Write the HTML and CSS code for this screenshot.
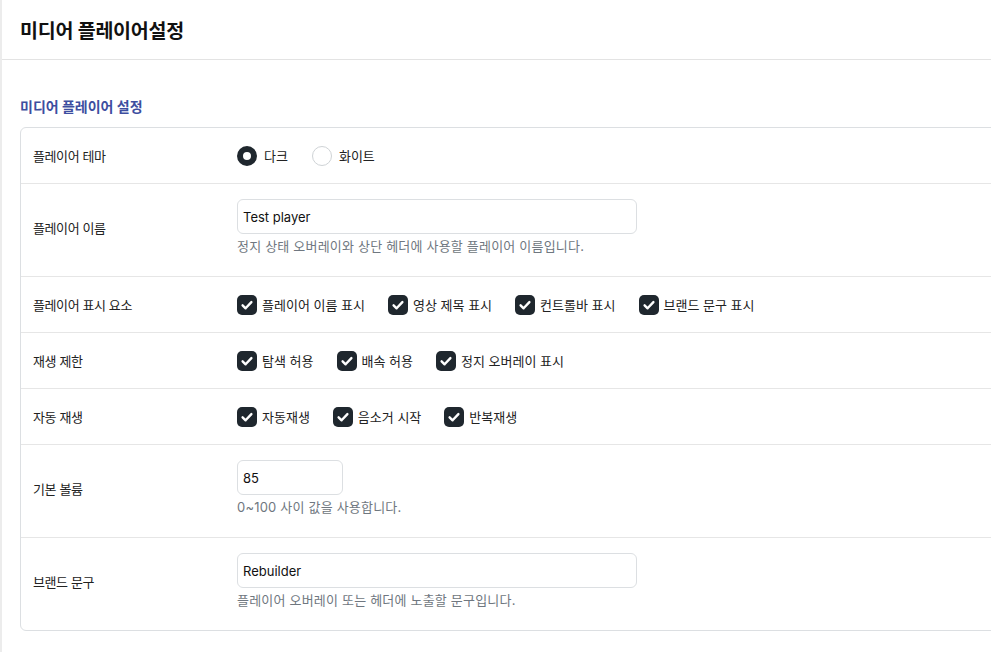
FILE: index.html
```html
<!DOCTYPE html>
<html lang="ko">
<head>
<meta charset="utf-8">
<title>미디어 플레이어설정</title>
<link rel="stylesheet" href="styles.css">
</head>
<body>
<div class="page">
  <header class="page-header">
    <h1 class="page-title">미디어 플레이어설정</h1>
  </header>
  <main class="content">
    <h2 class="section-title">미디어 플레이어 설정</h2>
    <div class="card">
      <div class="row">
        <div class="label">플레이어 테마</div>
        <div class="control options radios">
          <label class="opt"><span class="radio on"></span>다크</label>
          <label class="opt"><span class="radio"></span>화이트</label>
        </div>
      </div>
      <div class="row tall">
        <div class="label">플레이어 이름</div>
        <div class="control">
          <div class="input wide">Test player</div>
          <div class="help">정지 상태 오버레이와 상단 헤더에 사용할 플레이어 이름입니다.</div>
        </div>
      </div>
      <div class="row">
        <div class="label">플레이어 표시 요소</div>
        <div class="control options">
          <label class="opt"><span class="check"><svg viewBox="0 0 20 20"><path d="M5.6 10.3l3 3 5.8-6.2"/></svg></span>플레이어 이름 표시</label>
          <label class="opt"><span class="check"><svg viewBox="0 0 20 20"><path d="M5.6 10.3l3 3 5.8-6.2"/></svg></span>영상 제목 표시</label>
          <label class="opt"><span class="check"><svg viewBox="0 0 20 20"><path d="M5.6 10.3l3 3 5.8-6.2"/></svg></span>컨트롤바 표시</label>
          <label class="opt"><span class="check"><svg viewBox="0 0 20 20"><path d="M5.6 10.3l3 3 5.8-6.2"/></svg></span>브랜드 문구 표시</label>
        </div>
      </div>
      <div class="row">
        <div class="label">재생 제한</div>
        <div class="control options">
          <label class="opt"><span class="check"><svg viewBox="0 0 20 20"><path d="M5.6 10.3l3 3 5.8-6.2"/></svg></span>탐색 허용</label>
          <label class="opt"><span class="check"><svg viewBox="0 0 20 20"><path d="M5.6 10.3l3 3 5.8-6.2"/></svg></span>배속 허용</label>
          <label class="opt"><span class="check"><svg viewBox="0 0 20 20"><path d="M5.6 10.3l3 3 5.8-6.2"/></svg></span>정지 오버레이 표시</label>
        </div>
      </div>
      <div class="row">
        <div class="label">자동 재생</div>
        <div class="control options">
          <label class="opt"><span class="check"><svg viewBox="0 0 20 20"><path d="M5.6 10.3l3 3 5.8-6.2"/></svg></span>자동재생</label>
          <label class="opt"><span class="check"><svg viewBox="0 0 20 20"><path d="M5.6 10.3l3 3 5.8-6.2"/></svg></span>음소거 시작</label>
          <label class="opt"><span class="check"><svg viewBox="0 0 20 20"><path d="M5.6 10.3l3 3 5.8-6.2"/></svg></span>반복재생</label>
        </div>
      </div>
      <div class="row tall">
        <div class="label">기본 볼륨</div>
        <div class="control">
          <div class="input narrow">85</div>
          <div class="help">0~100 사이 값을 사용합니다.</div>
        </div>
      </div>
      <div class="row tall">
        <div class="label">브랜드 문구</div>
        <div class="control">
          <div class="input wide">Rebuilder</div>
          <div class="help">플레이어 오버레이 또는 헤더에 노출할 문구입니다.</div>
        </div>
      </div>
    </div>
  </main>
</div>
</body>
</html>
```
FILE: styles.css
```css
* { box-sizing: border-box; }
html, body { margin: 0; padding: 0; background: #fff; overflow: hidden; }
body {
  font-family: Inter, "Noto Sans CJK KR", sans-serif;
  color: #222;
  width: 991px;
  height: 652px;
}
.page {
  border-left: 2px solid #ececec;
  height: 652px;
}
.page-header {
  height: 60px;
  border-bottom: 1px solid #e3e3e3;
  padding: 0 18px;
  display: flex;
  align-items: center;
}
.page-title {
  margin: 0;
  font-size: 19.5px;
  font-weight: 700;
  color: #111;
  letter-spacing: -0.2px;
}
.content {
  padding: 37px 0 0 18px;
}
.section-title {
  margin: 0 0 10px;
  font-size: 14px;
  line-height: 20px;
  font-weight: 700;
  color: #3d4ea0;
}
.card {
  width: 1000px;
  border: 1px solid #dcdfe2;
  border-radius: 6px;
}
.row {
  display: grid;
  grid-template-columns: 204px 1fr;
  align-items: center;
  min-height: 56px;
  padding: 0 12px;
  border-bottom: 1px solid #e6e6e6;
}
.row:last-child { border-bottom: none; }
.row.tall {
  padding-top: 15px;
  padding-bottom: 21px;
}
.label {
  font-size: 13px;
  letter-spacing: -0.4px;
  color: #222;
}
.options {
  display: flex;
  align-items: center;
  gap: 23px;
  font-size: 13px;
}
.opt {
  display: flex;
  align-items: center;
  gap: 5px;
  color: #222;
}
.radios .opt { gap: 7px; }
.radios { gap: 24px; }
.radio {
  width: 20px;
  height: 20px;
  border-radius: 50%;
  border: 1px solid #cfd3d6;
  background: #fff;
  display: inline-block;
}
.radio.on {
  border: 6px solid #1f272e;
  background: #fff;
}
.check {
  width: 20px;
  height: 20px;
  border-radius: 5px;
  background: #1f272e;
  display: inline-flex;
}
.check svg {
  width: 20px;
  height: 20px;
  fill: none;
  stroke: #fff;
  stroke-width: 2.4;
  stroke-linecap: round;
  stroke-linejoin: round;
}
.input {
  height: 35px;
  border: 1px solid #dcdfe2;
  border-radius: 6px;
  padding: 0 5px;
  display: flex;
  align-items: center;
  font-size: 13px;
  color: #111;
}
.input.wide { width: 400px; }
.input.narrow { width: 106px; }
.help {
  margin-top: 3px;
  font-size: 13px;
  line-height: 18px;
  letter-spacing: 0.2px;
  color: #6f7780;
}
```
